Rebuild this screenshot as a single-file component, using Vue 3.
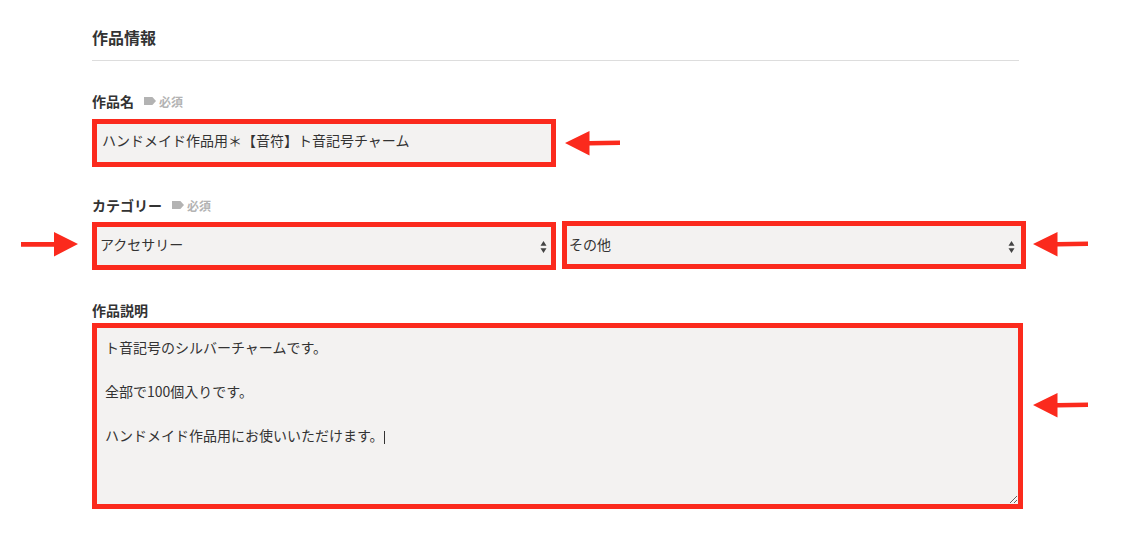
<template>
  <div class="page">
    <form class="form" @submit.prevent>
      <h2 class="heading">作品情報</h2>

      <div class="field field-name">
        <label class="label">作品名<span class="req"><i class="tag"></i>必須</span></label>
        <input class="box name-input" type="text" v-model="name" />
      </div>

      <div class="field field-category">
        <label class="label">カテゴリー<span class="req"><i class="tag"></i>必須</span></label>
        <div class="selects">
          <div class="select-wrap">
            <select class="box select" v-model="category">
              <option>アクセサリー</option>
            </select>
            <svg class="updown" width="7" height="12" viewBox="0 0 7 12"><path d="M3.5 0 6.5 4.7H.5zM3.5 12 .5 7.3H6.5z" /></svg>
          </div>
          <div class="select-wrap second">
            <select class="box select" v-model="subCategory">
              <option>その他</option>
            </select>
            <svg class="updown" width="7" height="12" viewBox="0 0 7 12"><path d="M3.5 0 6.5 4.7H.5zM3.5 12 .5 7.3H6.5z" /></svg>
          </div>
        </div>
      </div>

      <div class="field field-desc">
        <label class="label">作品説明</label>
        <div class="desc-wrap">
          <textarea class="box desc" v-model="description"></textarea>
          <span class="caret"></span>
        </div>
      </div>
    </form>

    <!-- red annotation arrows laid over the screenshot -->
    <svg
      v-for="arrow in arrows"
      :key="arrow.y"
      class="arrow"
      :style="{ left: arrow.x + 'px', top: arrow.y + 'px' }"
      width="60"
      height="28"
      viewBox="0 0 60 28"
    >
      <path :d="arrow.d" fill="#fb2a1d" />
    </svg>
  </div>
</template>

<script setup>
import { ref } from 'vue';

const name = ref('ハンドメイド作品用＊【音符】ト音記号チャーム');
const category = ref('アクセサリー');
const subCategory = ref('その他');
const description = ref(
  'ト音記号のシルバーチャームです。\n\n全部で100個入りです。\n\nハンドメイド作品用にお使いいただけます。'
);

const leftArrow = 'M0 12 24.5 0V10L55 9.5V14L24.5 14.5V24.5z';
const rightArrow = 'M0 10H33V0L57 12 33 24.5V14.7H0z';

const arrows = [
  { x: 565, y: 131, d: leftArrow },
  { x: 21, y: 232, d: rightArrow },
  { x: 1033, y: 232, d: leftArrow },
  { x: 1033, y: 393, d: leftArrow },
];
</script>

<style>
html,
body {
  margin: 0;
  background: #fff;
}
</style>

<style scoped>
.page {
  position: relative;
  width: 1135px;
  height: 536px;
  overflow: hidden;
  font-family: "Noto Sans CJK JP", "Noto Sans", sans-serif;
  color: #333;
}

.form {
  width: 927px;
  margin-left: 92px;
  padding-top: 26px;
}

.heading {
  margin: 0;
  padding-bottom: 12px;
  height: 22px;
  line-height: 22px;
  font-size: 16px;
  font-weight: 700;
  border-bottom: 1px solid #ddd;
}

.field-name {
  margin-top: 31px;
}

.field-category {
  margin-top: 29px;
}

.field-desc {
  margin-top: 31px;
}

.label {
  display: flex;
  align-items: center;
  height: 18px;
  margin-bottom: 9px;
  font-size: 14px;
  font-weight: 700;
}

.field-category .label {
  margin-bottom: 8px;
}

.field-desc .label {
  margin-bottom: 4px;
}

.req {
  display: flex;
  align-items: center;
  margin-left: 10px;
  font-size: 12px;
  color: #b3b3b3;
}

.tag {
  width: 12px;
  height: 8px;
  margin-right: 3px;
  background: #b3b3b3;
  clip-path: polygon(0 0, 70% 0, 100% 50%, 70% 100%, 0 100%);
}

.box {
  display: block;
  box-sizing: border-box;
  margin: 0;
  border: 5px solid #fb2a1d;
  border-radius: 0;
  outline: none;
  background: #f3f2f1;
  font: inherit;
  font-size: 14px;
  color: #333;
}

.name-input {
  width: 464px;
  height: 48px;
  padding: 0 5px 6px;
}

.selects {
  display: grid;
  grid-template-columns: 464px 464px;
  column-gap: 6px;
}

.select-wrap {
  position: relative;
}

.select-wrap.second {
  margin-top: -1px;
}

.select {
  width: 100%;
  height: 48px;
  padding: 0 3px 4px;
  appearance: none;
}

.second .select {
  padding-left: 2px;
  padding-bottom: 2px;
}

.updown {
  position: absolute;
  right: 9px;
  top: 19px;
  pointer-events: none;
}

.second .updown {
  right: 11px;
  top: 20px;
}

.updown path {
  fill: #444;
}

.desc-wrap {
  position: relative;
}

.desc {
  width: 931px;
  height: 186px;
  padding: 8px 8px;
  line-height: 22px;
  resize: both;
}

/* text cursor left at the end of the last line */
.caret {
  position: absolute;
  left: 292px;
  top: 108px;
  width: 1px;
  height: 13px;
  background: #333;
}

.arrow {
  position: absolute;
}
</style>
